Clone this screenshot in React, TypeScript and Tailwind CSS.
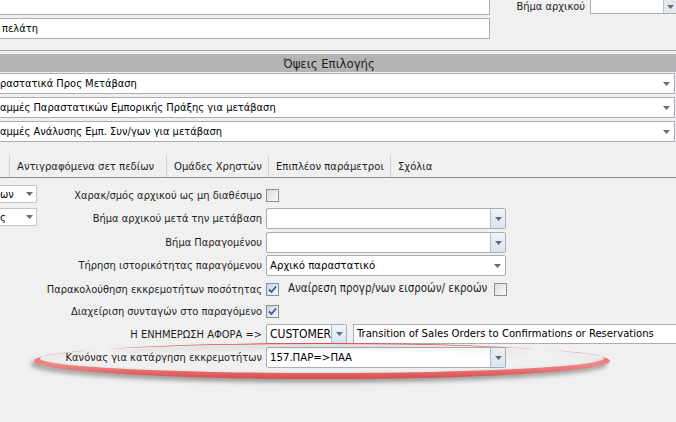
import React from 'react'

const font = { fontFamily: '"DejaVu Sans", Verdana, sans-serif', fontStretch: 'condensed' as const }

function Arrow() {
  return (
    <svg width="7" height="4" viewBox="0 0 7 4" className="shrink-0">
      <path d="M0 0 H7 L3.5 4 Z" fill="#6b6b6b" />
    </svg>
  )
}

function DropBtn() {
  return (
    <div className="w-[15px] self-stretch flex items-center justify-center bg-gradient-to-b from-[#eef4fb] to-[#d6e4f3] border-l border-[#a9bcd6] rounded-r-[2px]">
      <Arrow />
    </div>
  )
}

function Combo({ text, w, btn, h = 21, big }: { text?: string; w: string; btn?: boolean; h?: number; big?: boolean }) {
  return (
    <div className={`${w} flex items-stretch bg-white border border-[#abadb3] rounded-[2px]`} style={{ height: h }}>
      <div className={`flex-1 flex items-center pl-[3px] overflow-hidden whitespace-nowrap text-black ${big ? 'text-[12px]' : 'text-[11.3px]'}`}>{text}</div>
      {btn ? <DropBtn /> : <div className="w-[15px] flex items-center justify-center"><Arrow /></div>}
    </div>
  )
}

function Check({ checked }: { checked?: boolean }) {
  return (
    <div
      className={`w-[13px] h-[13px] border border-[#8f8f8f] flex items-center justify-center bg-gradient-to-br ${
        checked ? 'from-[#c9d6e6] to-[#f4f7fb]' : 'from-[#dcdcdc] to-[#fafafa]'
      }`}
    >
      {checked && (
        <svg width="9" height="9" viewBox="0 0 9 9">
          <path d="M1 4.5 L3.5 7 L8 1.5" stroke="#3c5a8c" strokeWidth="1.8" fill="none" />
        </svg>
      )}
    </div>
  )
}

function Row({ label, h = 21, mt, children }: { label: string; h?: number; mt: string; children: React.ReactNode }) {
  return (
    <div className={`flex items-center ${mt}`} style={{ height: h }}>
      <div className="w-[229px] text-right pr-[4px] whitespace-nowrap text-[#1e1e1e]">{label}</div>
      <div className="flex items-center">{children}</div>
    </div>
  )
}

const tabs = [
  { t: '', w: 'w-[10px]' },
  { t: 'Αντιγραφόμενα σετ πεδίων', w: 'w-[157px]' },
  { t: 'Ομάδες Χρηστών', w: 'w-[102px]' },
  { t: 'Επιπλέον παράμετροι', w: 'w-[122px]' },
  { t: 'Σχόλια', w: 'w-[60px]' },
]

export default function App() {
  return (
    <div className="relative w-[676px] h-[422px] overflow-hidden bg-[#f0f0f0] text-[11px] leading-none" style={font}>
      {/* top fields */}
      <div className="flex h-[15px]">
        <div className="w-[490px] h-[15px] bg-white border-b border-r border-[#abadb3]" />
        <div className="w-[100px] text-right pr-[5px] pt-[1px] text-[#1e1e1e]">Βήμα αρχικού</div>
        <div className="flex-1 flex h-[14px] bg-white border-b border-l border-[#abadb3]">
          <div className="flex-1" />
          <div className="w-[13px] flex items-center justify-center bg-[#e4e8ee] border-l border-[#b8c2d0]"><Arrow /></div>
        </div>
      </div>
      <div className="mt-[3px] w-[490px] h-[21px] bg-white border border-l-0 border-[#abadb3] flex items-center pl-[2px] text-black">πελάτη</div>

      <div className="mt-[11px] h-[1px] bg-[#a0a0a0]" />
      <div className="mt-[3px] h-[18px] bg-[#b4b4b4] flex items-center justify-center pr-[18px] text-[13px] text-[#1e1e1e]">Όψεις Επιλογής</div>
      <div className="mt-[1px] flex flex-col gap-[3px]">
        {['ραστατικά Προς Μετάβαση', 'αμμές Παραστατικών Εμπορικής Πράξης για μετάβαση', 'αμμές Ανάλυσης Εμπ. Συν/γων για μετάβαση'].map(t => (
          <div key={t} className="w-[675px] h-[21px] flex items-center bg-white border border-l-0 border-[#abadb3]">
            <div className="flex-1 text-black">{t}</div>
            <div className="w-[15px] flex justify-center"><Arrow /></div>
          </div>
        ))}
      </div>

      {/* tabs */}
      <div className="mt-[14px] h-[22px] flex border-b border-[#8c8c8c]">
        {tabs.map((tab, i) => (
          <div
            key={i}
            className={`h-full flex items-center whitespace-nowrap text-[11.2px] text-[#1e1e1e] ${tab.w} ${i > 0 ? 'pl-[7px]' : ''} ${i < 4 ? 'border-r border-[#d0d0d0]' : ''}`}
          >
            {tab.t}
          </div>
        ))}
      </div>

      {/* form */}
      <div className="flex">
        <div className="w-[40px] flex flex-col gap-[5px] mt-[7px]">
          <div className="w-[37px] h-[18px] flex items-center bg-white border border-l-0 border-[#c5c5c5]">
            <span className="flex-1 text-black">ων</span>
            <span className="w-[13px] flex justify-center"><Arrow /></span>
          </div>
          <div className="w-[37px] h-[18px] flex items-center bg-white border border-l-0 border-[#c5c5c5]">
            <span className="flex-1 text-black">ς</span>
            <span className="w-[13px] flex justify-center"><Arrow /></span>
          </div>
        </div>
        <div className="flex flex-col">
          <Row label="Χαρακ/σμός αρχικού ως μη διαθέσιμο" h={20} mt="mt-[7px]">
            <Check />
          </Row>
          <Row label="Βήμα αρχικού μετά την μετάβαση" mt="mt-[3px]">
            <Combo w="w-[240px]" btn />
          </Row>
          <Row label="Βήμα Παραγομένου" mt="mt-[3px]">
            <Combo w="w-[240px]" btn />
          </Row>
          <Row label="Τήρηση ιστορικότητας παραγόμενου" mt="mt-[2px]">
            <Combo w="w-[240px]" text="Αρχικό παραστατικό" />
          </Row>
          <Row label="Παρακολούθηση εκκρεμοτήτων ποσότητας" h={20} mt="mt-[3px]">
            <Check checked />
            <span className="ml-[9px] w-[206px] whitespace-nowrap text-[11.5px] text-[#1e1e1e]">Αναίρεση προγρ/νων εισροών/ εκροών</span>
            <Check />
          </Row>
          <Row label="Διαχείριση συνταγών στο παραγόμενο" h={20} mt="mt-[2px]">
            <Check checked />
          </Row>
          <Row label="Η ΕΝΗΜΕΡΩΣΗ ΑΦΟΡΑ =>" h={20} mt="mt-[3px]">
            <Combo w="w-[81px]" h={20} text="CUSTOMER" btn big />
            <div className="ml-[6px] w-[330px] h-[20px] flex items-center pl-[3px] bg-white border border-r-0 border-[#abadb3] whitespace-nowrap text-[11.2px] text-black">
              Transition of Sales Orders to Confirmations or Reservations
            </div>
          </Row>
          <Row label="Κανόνας για κατάργηση εκκρεμοτήτων" mt="mt-[3px]">
            <Combo w="w-[240px]" text="157.ΠΑΡ=>ΠΑΑ" btn />
          </Row>
        </div>
      </div>

      {/* hand-drawn highlight ellipse */}
      <svg className="absolute left-0 top-0 pointer-events-none" width="676" height="422" viewBox="0 0 676 422">
        <defs>
          <filter id="blur" x="-10%" y="-50%" width="120%" height="200%">
            <feGaussianBlur stdDeviation="2.5" />
          </filter>
          <linearGradient id="red" x1="0" y1="0" x2="0" y2="1">
            <stop offset="0" stopColor="#e04848" />
            <stop offset="0.6" stopColor="#f08a8a" />
            <stop offset="1" stopColor="#d84a4a" />
          </linearGradient>
        </defs>
        <path
          d="M34 361 A288 18 0 1 0 610 361 A288 18 0 1 0 34 361 Z M40 358.5 A282 14.5 0 1 1 604 358.5 A282 14.5 0 1 1 40 358.5 Z"
          fill="#606060"
          fillRule="evenodd"
          opacity="0.7"
          filter="url(#blur)"
          transform="translate(-3 3)"
        />
        <path
          d="M34 361 A288 18 0 1 0 610 361 A288 18 0 1 0 34 361 Z M40 358.5 A282 14.5 0 1 1 604 358.5 A282 14.5 0 1 1 40 358.5 Z"
          fill="url(#red)"
          fillRule="evenodd"
        />
      </svg>
    </div>
  )
}
